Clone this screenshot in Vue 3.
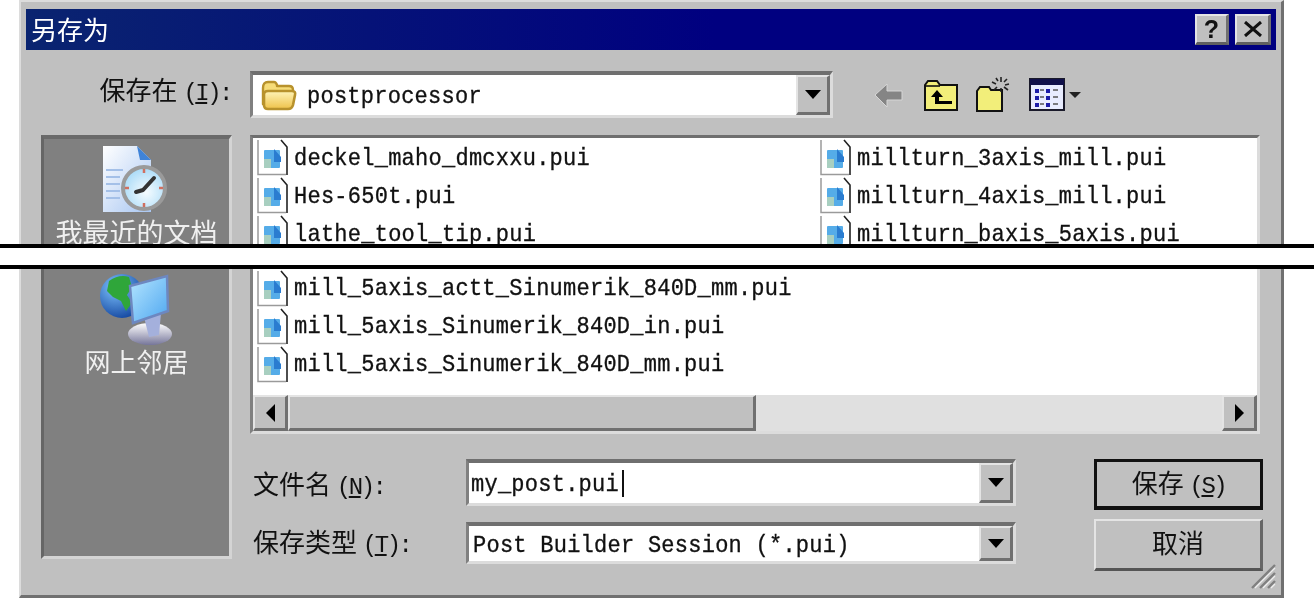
<script setup>
const topFiles = [
  ['deckel_maho_dmcxxu.pui', 'millturn_3axis_mill.pui'],
  ['Hes-650t.pui', 'millturn_4axis_mill.pui'],
  ['lathe_tool_tip.pui', 'millturn_baxis_5axis.pui'],
]
const lowerFiles = [
  'mill_5axis_actt_Sinumerik_840D_mm.pui',
  'mill_5axis_Sinumerik_840D_in.pui',
  'mill_5axis_Sinumerik_840D_mm.pui',
]
</script>

<template>
  <div class="page">
    <div class="dialog">
      <div class="titlebar">
        <span class="title">另存为</span>
        <div class="title-btns">
          <button class="tbtn help">?</button>
          <button class="tbtn close">
            <svg width="20" height="16" viewBox="0 0 20 16"><path d="M2 1 L18 15 M18 1 L2 15" stroke="#111" stroke-width="3" /></svg>
          </button>
        </div>
      </div>

      <div class="main">
        <div class="label-right">保存在 <span class="paren">(<u>I</u>):</span></div>
        <div class="toprow">
          <div class="combo look">
            <svg class="folder" width="36" height="31" viewBox="0 0 36 31">
              <defs>
                <linearGradient id="fg" x1="0" y1="0" x2="0" y2="1">
                  <stop offset="0" stop-color="#fff4b8" />
                  <stop offset="1" stop-color="#eec24a" />
                </linearGradient>
              </defs>
              <path d="M2 8 Q2 2 7 2 L13 2 Q15 2 16 5 L16 6 L28 6 Q32 6 32 10 L32 14 L2 24 Z" fill="#f6dc78" stroke="#b8922c" stroke-width="2.400" stroke-linejoin="round" />
              <path d="M3 14 Q3 11 7 11 L31 11 Q35 11 34 15 L32 25 Q31 29 27 29 L7 29 Q3 29 3 25 Z" fill="url(#fg)" stroke="#b8922c" stroke-width="2.600" stroke-linejoin="round" />
            </svg>
            <span class="mono combo-text">postprocessor</span>
            <span class="drop"><i class="arrow"></i></span>
          </div>
          <div class="tools">
            <svg class="back" width="30" height="26" viewBox="0 0 30 26"><path d="M1 13 L13 2 L13 9 L28 9 L28 18 L13 18 L13 25 Z" fill="#858585" stroke="#d6d6d6" stroke-width="1" /></svg>
            <svg width="36" height="34" viewBox="0 0 36 34">
              <path d="M2 32 L2 7 L5 3 L14 3 L17 7 L34 7 L34 32 Z" fill="#f2ee7a" stroke="#111" stroke-width="2" />
              <path d="M2 8 L17 8" stroke="#111" stroke-width="1.600" />
              <path d="M14 12 L8 19 L12 19 L12 26 L29 26 L29 23 L16 23 L16 19 L20 19 Z" fill="#000" />
            </svg>
            <svg width="38" height="37" viewBox="0 0 38 37">
              <path d="M2 35 L2 15 L5 11 L14 11 L16 14 L27 14 L27 35 Z" fill="#f2ee7a" stroke="#111" stroke-width="2" />
              <path d="M26 1 L26 6 M26 12 L26 16 M34 8 L30 9 M17 6 L21 8 M33 14 L29 11 M19 14 L22 11 M32 3 L29 6 M21 2 L23 5" stroke="#222" stroke-width="1.600" />
            </svg>
            <div class="views">
              <svg width="36" height="33" viewBox="0 0 36 33">
                <rect x="1" y="1" width="34" height="31" fill="#e8ecff" stroke="#1a1a2a" stroke-width="2" />
                <rect x="1" y="1" width="34" height="6" fill="#10104a" />
                <path d="M6 13 h4 M6 20 h4 M6 27 h4 M17 13 h4 M17 20 h4 M17 27 h4" stroke="#1c1ca8" stroke-width="4" />
                <path d="M11 12 h4 M11 19 h4 M11 26 h4 M24 12 h5 M24 19 h5 M24 26 h5" stroke="#555" stroke-width="1.600" />
              </svg>
              <i class="arrow small"></i>
            </div>
          </div>
        </div>

        <aside class="places">
          <div class="place recent">
            <svg width="68" height="72" viewBox="0 0 68 72">
              <defs>
                <linearGradient id="dg" x1="0" y1="0" x2="1" y2="1">
                  <stop offset="0" stop-color="#ffffff" />
                  <stop offset="1" stop-color="#a8c6f2" />
                </linearGradient>
                <radialGradient id="cl" cx="0.55" cy="0.6" r="0.6">
                  <stop offset="0" stop-color="#f6fcff" />
                  <stop offset="1" stop-color="#a8daf7" />
                </radialGradient>
              </defs>
              <path d="M0 2 L34 2 L48 16 L48 68 L0 68 Z" fill="url(#dg)" />
              <path d="M34 2 L48 16 L37 16 Z" fill="#3f83d8" />
              <path d="M3 26 H20 M3 33 H17 M3 40 H17 M3 47 H17 M3 54 H17" stroke="#a4c0e8" stroke-width="2" />
              <circle cx="41" cy="44" r="21" fill="url(#cl)" stroke="#9a9a9a" stroke-width="4" />
              <path d="M40 46 L51 34 M40 46 L33 48" stroke="#333" stroke-width="4" stroke-linecap="round" />
              <path d="M41 25 v4 M41 59 v4 M22 44 h4 M56 44 h4" stroke="#d07060" stroke-width="2.500" />
            </svg>
            <span class="place-label">我最近的文档</span>
          </div>
          <div class="place network">
            <svg width="74" height="74" viewBox="0 0 74 74">
              <defs>
                <radialGradient id="gl" cx="0.35" cy="0.3" r="0.8">
                  <stop offset="0" stop-color="#7fc4ff" />
                  <stop offset="1" stop-color="#0d3f9a" />
                </radialGradient>
                <linearGradient id="sc" x1="0" y1="0" x2="1" y2="1">
                  <stop offset="0" stop-color="#b6e6ff" />
                  <stop offset="1" stop-color="#4da6f0" />
                </linearGradient>
                <linearGradient id="st" x1="0" y1="0" x2="0" y2="1">
                  <stop offset="0" stop-color="#ffffff" />
                  <stop offset="1" stop-color="#76769a" />
                </linearGradient>
              </defs>
              <circle cx="23" cy="23" r="22" fill="url(#gl)" />
              <path d="M10 8 Q20 1 30 4 L33 14 L28 22 L33 30 L27 38 L22 28 L14 24 L8 18 Z" fill="#2fa63a" />
              <ellipse cx="51" cy="61" rx="22" ry="11" fill="url(#st)" />
              <path d="M45 44 L62 40 L60 62 L50 64 Z" fill="#a4b0dc" />
              <path d="M31 13 L68 3 L69 38 L34 50 Z" fill="url(#sc)" stroke="#6d87c0" stroke-width="2.500" />
            </svg>
            <span class="place-label">网上邻居</span>
          </div>
        </aside>

        <div class="content">
          <div class="listbox">
            <div class="files">
              <div class="file-grid">
                <template v-for="(pair, i) in topFiles" :key="i">
                  <div v-for="name in pair" :key="name" class="file">
                    <svg class="fileicon" width="31" height="37" viewBox="0 0 31 37">
                      <path d="M1 1 L24 1 L30 8 L30 36 L1 36 Z" fill="#fff" />
                      <path d="M1 1 L1 35.500 L29 35.500" fill="none" stroke="#9a9a9a" stroke-width="1.500" />
                      <path d="M24 1 L30 8 L30 36" fill="none" stroke="#222" stroke-width="1.600" />
                      <rect x="7" y="11" width="16" height="18" rx="1" fill="#55ace8" />
                      <path d="M7 20 L14 20 L14 29 L7 29 Z" fill="#a8cfc0" />
                      <path d="M17 10 L24 18 L24 23 L17 23 Z" fill="#2a7cd0" />
                    </svg>
                    <span class="mono">{{ name }}</span>
                  </div>
                </template>
              </div>
              <div class="file-lower">
                <div v-for="name in lowerFiles" :key="name" class="file">
                  <svg class="fileicon" width="31" height="37" viewBox="0 0 31 37">
                    <path d="M1 1 L24 1 L30 8 L30 36 L1 36 Z" fill="#fff" />
                    <path d="M1 1 L1 35.500 L29 35.500" fill="none" stroke="#9a9a9a" stroke-width="1.500" />
                    <path d="M24 1 L30 8 L30 36" fill="none" stroke="#222" stroke-width="1.600" />
                    <rect x="7" y="11" width="16" height="18" rx="1" fill="#55ace8" />
                    <path d="M7 20 L14 20 L14 29 L7 29 Z" fill="#a8cfc0" />
                    <path d="M17 10 L24 18 L24 23 L17 23 Z" fill="#2a7cd0" />
                  </svg>
                  <span class="mono">{{ name }}</span>
                </div>
              </div>
            </div>
            <div class="hscroll">
              <span class="sbtn"><i class="tri left"></i></span>
              <span class="thumb"></span>
              <span class="track"></span>
              <span class="sbtn"><i class="tri right"></i></span>
            </div>
          </div>

          <div class="form">
            <div class="fields">
              <div class="field first">
                <label class="flabel">文件名 <span class="paren">(<u>N</u>):</span></label>
                <div class="combo entry">
                  <span class="mono entry-text">my_post.pui</span><span class="caret"></span>
                  <span class="drop"><i class="arrow"></i></span>
                </div>
              </div>
              <div class="field second">
                <label class="flabel raised">保存类型 <span class="paren">(<u>T</u>):</span></label>
                <div class="combo entry">
                  <span class="mono type-text">Post Builder Session (*.pui)</span>
                  <span class="drop"><i class="arrow"></i></span>
                </div>
              </div>
            </div>
            <div class="actions">
              <button class="btn default">保存 <span class="paren">(<u>S</u>)</span></button>
              <button class="btn cancel">取消</button>
            </div>
          </div>
        </div>
      </div>

      <svg class="grip" width="26" height="26" viewBox="0 0 26 26">
        <path d="M25 2 L2 25 M25 10 L10 25 M25 18 L18 25" stroke="#808080" stroke-width="2.400" />
        <path d="M25 5 L5 25 M25 13 L13 25 M25 21 L21 25" stroke="#efefef" stroke-width="1.200" />
      </svg>
    </div>
    <div class="cut"></div>
  </div>
</template>

<style>
html, body { margin: 0; background: #fff; }
</style>

<style scoped>
.page {
  position: relative;
  width: 1314px;
  height: 599px;
  overflow: hidden;
  background: #fff;
  font-family: "Noto Sans CJK SC", "Liberation Sans", sans-serif;
  color: #111;
}
.dialog {
  position: relative;
  box-sizing: border-box;
  margin-left: 19px;
  width: 1265px;
  height: 598px;
  padding: 7px 5px 0;
  background: #c0c0c0;
  border-style: solid;
  border-width: 2px 3px 3px 2px;
  border-color: #dcdcdc #707070 #707070 #dcdcdc;
  filter: blur(0.5px);
}
.titlebar {
  height: 41px;
  display: flex;
  align-items: center;
  justify-content: space-between;
  background: linear-gradient(90deg, #0a2470, #000080 55%);
  color: #fff;
}
.title { font-size: 26px; line-height: 40px; margin-left: 5px; margin-top: -2px; }
.title-btns { display: flex; gap: 6px; margin-right: 5px; }
.tbtn {
  box-sizing: border-box;
  height: 31px;
  width: 34px;
  padding: 0;
  display: flex;
  align-items: center;
  justify-content: center;
  background: #c0c0c0;
  border-style: solid;
  border-width: 2px 3px 3px 2px;
  border-color: #e4e4e4 #707070 #606060 #e4e4e4;
  color: #111;
  font: 700 25px/1 "Liberation Sans", sans-serif;
}
.close { width: 36px; }

.main {
  display: grid;
  grid-template-columns: 191px 1fr;
  column-gap: 18px;
  row-gap: 17px;
  padding: 21px 0 0 15px;
}
.label-right {
  font-size: 26px;
  line-height: 36px;
  height: 47px;
  text-align: right;
  white-space: nowrap;
  padding-right: 1px;
}
.paren { font: 24px/1 "Liberation Mono", monospace; letter-spacing: -2.500px; }
.toprow { display: flex; height: 47px; align-items: center; }
.combo {
  position: relative;
  box-sizing: border-box;
  display: flex;
  align-items: center;
  background: #fff;
  border-style: solid;
  border-width: 4px 3px 3px 3px;
  border-color: #6f6f6f #dcdcdc #dcdcdc #808080;
}
.look { width: 583px; height: 47px; }
.folder { margin-left: 8px; flex: none; }
.combo-text { margin-left: 10px; }
.drop {
  position: absolute;
  right: 0;
  top: 0;
  bottom: 0;
  width: 34px;
  display: flex;
  align-items: center;
  justify-content: center;
  box-sizing: border-box;
  background: #c0c0c0;
  border-style: solid;
  border-width: 2px 3px 3px 2px;
  border-color: #e4e4e4 #707070 #707070 #e4e4e4;
}
.arrow {
  width: 0;
  height: 0;
  border-style: solid;
  border-width: 9px 8px 0;
  border-color: #000 transparent transparent;
}
.arrow.small { border-width: 6px 6px 0; border-color: #222 transparent transparent; margin-left: 4px; }
.tools { display: flex; align-items: center; margin-left: 41px; gap: 16px; }
.back { margin-right: 3px; }
.views { display: flex; align-items: center; }

.mono {
  display: inline-block;
  font: 22px/1 "Liberation Mono", monospace;
  letter-spacing: 0.25px;
  color: #111;
  white-space: nowrap;
  transform: translateY(2px) scaleY(1.1);
  -webkit-text-stroke: 0.3px #111;
}

.places {
  box-sizing: border-box;
  height: 424px;
  background: #808080;
  border-style: solid;
  border-width: 4px 3px 3px 3px;
  border-color: #6a6a6a #d4d4d4 #d4d4d4 #666;
  display: flex;
  flex-direction: column;
  align-items: center;
  color: #f2f2f2;
}
.place { display: flex; flex-direction: column; align-items: center; }
.recent { padding-top: 5px; }
.network { margin-top: 25px; }
.place-label { font-size: 27px; line-height: 32px; white-space: nowrap; color: #f0f0f0; }
.network .place-label { font-size: 26px; margin-top: -2px; }

.content { display: flex; flex-direction: column; }
.listbox {
  box-sizing: border-box;
  width: 1010px;
  height: 299px;
  background: #fff;
  border-style: solid;
  border-width: 3px;
  border-color: #6f6f6f #dcdcdc #dcdcdc #808080;
  display: flex;
  flex-direction: column;
}
.files { flex: 1; padding-left: 4px; }
.file-grid { display: grid; grid-template-columns: 563px 1fr; }
.file-lower { margin-top: 17px; }
.file { display: flex; align-items: center; height: 38px; gap: 6px; }
.fileicon { flex: none; }
.hscroll { display: flex; height: 36px; background: #e0e0e0; }
.sbtn {
  box-sizing: border-box;
  width: 35px;
  display: flex;
  align-items: center;
  justify-content: center;
  background: #c0c0c0;
  border-style: solid;
  border-width: 2px 3px 3px 2px;
  border-color: #e4e4e4 #707070 #707070 #e4e4e4;
}
.thumb {
  box-sizing: border-box;
  width: 468px;
  background: #c0c0c0;
  border-style: solid;
  border-width: 2px 3px 3px 2px;
  border-color: #e4e4e4 #707070 #707070 #e4e4e4;
}
.track { flex: 1; }
.tri { width: 0; height: 0; border-style: solid; }
.tri.left { border-width: 9px 9px 9px 0; border-color: transparent #000 transparent transparent; }
.tri.right { border-width: 9px 0 9px 9px; border-color: transparent transparent transparent #000; }

.form { display: flex; margin-top: 25px; }
.fields { display: flex; flex-direction: column; gap: 16px; }
.field { display: flex; align-items: center; }
.first { height: 47px; }
.second { height: 42px; }
.flabel { width: 216px; font-size: 26px; margin-left: 3px; margin-right: -3px; white-space: nowrap; }
.flabel.raised { margin-bottom: 6px; }
.entry { width: 550px; height: 100%; }
.entry-text { margin-left: 2px; }
.type-text { margin-left: 4px; }
.caret { width: 2px; height: 27px; background: #111; margin-left: 3px; }
.actions { display: flex; flex-direction: column; gap: 9px; margin-left: 78px; }
.btn {
  box-sizing: border-box;
  width: 169px;
  height: 52px;
  padding: 0;
  background: #c0c0c0;
  border-style: solid;
  border-width: 2px 3px 3px 2px;
  border-color: #e4e4e4 #666 #555 #e4e4e4;
  font: 26px/1 "Noto Sans CJK SC", sans-serif;
  color: #111;
}
.btn.cancel { padding-bottom: 5px; }
.btn.default { height: 51px; border: 3px solid #111; border-bottom-width: 4px; }
.grip { position: absolute; right: 5px; bottom: 6px; }

.cut {
  position: absolute;
  left: 0;
  right: 0;
  top: 244px;
  height: 17px;
  background: #fff;
  border-top: 4px solid #000;
  border-bottom: 4px solid #000;
}
</style>
